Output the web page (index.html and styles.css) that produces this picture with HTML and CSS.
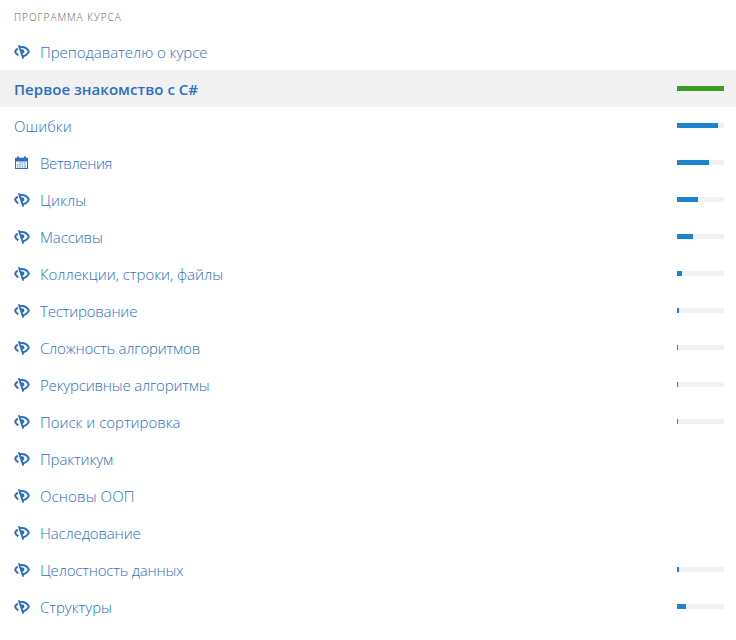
FILE: index.html
```
<!DOCTYPE html>
<html lang="ru">
<head>
<meta charset="utf-8">
<title>Программа курса</title>
<link rel="stylesheet" href="styles.css">
</head>
<body>
<svg class="defs" aria-hidden="true">
  <symbol id="hidden" viewBox="0 0 16 16">
    <g fill="none" stroke="currentColor">
      <path d="M4.8 1.2L9.3 14.6" stroke-width="1.8"/>
      <path d="M5.2 3.3C10.4 2.4 13.4 4.6 14.8 7.6C13.4 10.4 11.4 12 8.2 12.5" stroke-width="2"/>
      <path d="M3.8 4.6Q1.8 5.8 1.1 7.6Q1.8 9.8 4.3 11.4" stroke-width="1.9"/>
    </g>
    <path d="M6.4 5.6C8.6 4.8 10.5 5.8 10.3 7.6C10.2 9.2 9.1 10 7.8 10Z" fill="currentColor"/>
  </symbol>
  <symbol id="calendar" viewBox="0 0 16 16">
    <path fill="currentColor" fill-rule="evenodd" d="M1 3.4Q1 2.8 1.6 2.8H3V1.6H5V2.8H10V1.6H12V2.8H13.4Q14 2.8 14 3.4V13.4Q14 14 13.4 14H1.6Q1 14 1 13.4ZM2 6.6V13H13V6.6Z"/>
    <path d="M5 7.9H12.2M2.8 9.9H12.2M2.8 11.9H12.2" stroke="currentColor" stroke-width="1.2" stroke-dasharray="1.7 .7" opacity=".65"/>
  </symbol>
</svg>
<main class="course">
  <h1 class="heading">Программа курса</h1>
  <nav class="units">
    <a class="unit"><svg class="icon"><use href="#hidden"/></svg><span class="label">Преподавателю о курсе</span></a>
    <a class="unit active"><span class="label">Первое знакомство с C#</span><span class="bar"><i class="fill done" style="width:47px"></i></span></a>
    <a class="unit"><span class="label">Ошибки</span><span class="bar"><i class="fill" style="width:41px"></i></span></a>
    <a class="unit"><svg class="icon"><use href="#calendar"/></svg><span class="label tighter">Ветвления</span><span class="bar"><i class="fill" style="width:32px"></i></span></a>
    <a class="unit"><svg class="icon"><use href="#hidden"/></svg><span class="label loose">Циклы</span><span class="bar"><i class="fill" style="width:21px"></i></span></a>
    <a class="unit"><svg class="icon"><use href="#hidden"/></svg><span class="label snug">Массивы</span><span class="bar"><i class="fill" style="width:16px"></i></span></a>
    <a class="unit"><svg class="icon"><use href="#hidden"/></svg><span class="label">Коллекции, строки, файлы</span><span class="bar"><i class="fill" style="width:5px"></i></span></a>
    <a class="unit"><svg class="icon"><use href="#hidden"/></svg><span class="label tight">Тестирование</span><span class="bar"><i class="fill" style="width:2px"></i></span></a>
    <a class="unit"><svg class="icon"><use href="#hidden"/></svg><span class="label tight">Сложность алгоритмов</span><span class="bar"><i class="fill" style="width:1px"></i></span></a>
    <a class="unit"><svg class="icon"><use href="#hidden"/></svg><span class="label tight">Рекурсивные алгоритмы</span><span class="bar"><i class="fill" style="width:1px"></i></span></a>
    <a class="unit"><svg class="icon"><use href="#hidden"/></svg><span class="label">Поиск и сортировка</span><span class="bar"><i class="fill" style="width:1px"></i></span></a>
    <a class="unit"><svg class="icon"><use href="#hidden"/></svg><span class="label snug">Практикум</span></a>
    <a class="unit"><svg class="icon"><use href="#hidden"/></svg><span class="label loose">Основы ООП</span></a>
    <a class="unit"><svg class="icon"><use href="#hidden"/></svg><span class="label snug">Наследование</span></a>
    <a class="unit"><svg class="icon"><use href="#hidden"/></svg><span class="label tight">Целостность данных</span><span class="bar"><i class="fill" style="width:2px"></i></span></a>
    <a class="unit"><svg class="icon"><use href="#hidden"/></svg><span class="label">Структуры</span><span class="bar"><i class="fill" style="width:9px"></i></span></a>
  </nav>
</main>
</body>
</html>
```
FILE: styles.css
```
body {
  margin: 0;
  background: #fff;
  font-family: "Open Sans", "Noto Sans", sans-serif;
}
.defs { display: none; }
.course { height: 640px; overflow: hidden; }
.heading {
  margin: 0;
  height: 33px;
  padding-left: 14px;
  font-size: 10px;
  font-weight: 350;
  line-height: 34px;
  letter-spacing: .98px;
  text-transform: uppercase;
  color: #606060;
}
.units { display: flex; flex-direction: column; }
.unit {
  display: flex;
  align-items: center;
  height: 37px;
  padding: 0 12px 0 14px;
  color: #2c6fc4;
}
.icon { width: 16px; height: 16px; margin: 1px 10px 0 0; flex: none; }
.label {
  padding-top: 2px;
  font-size: 15px;
  font-weight: 300;
  line-height: 35px;
  letter-spacing: -.02px;
  white-space: nowrap;
}
.loose { letter-spacing: .12px; }
.snug { letter-spacing: -.12px; }
.tight { letter-spacing: -.19px; }
.tighter { letter-spacing: -.35px; }
.active { background: #f1f1f1; }
.active .label { font-weight: 600; letter-spacing: .04px; }
.bar {
  width: 47px;
  height: 5px;
  margin-left: auto;
  background: #f2f2f2;
}
.fill { display: block; height: 5px; background: #1d84d1; }
.done { background: #3f9b22; }
```
